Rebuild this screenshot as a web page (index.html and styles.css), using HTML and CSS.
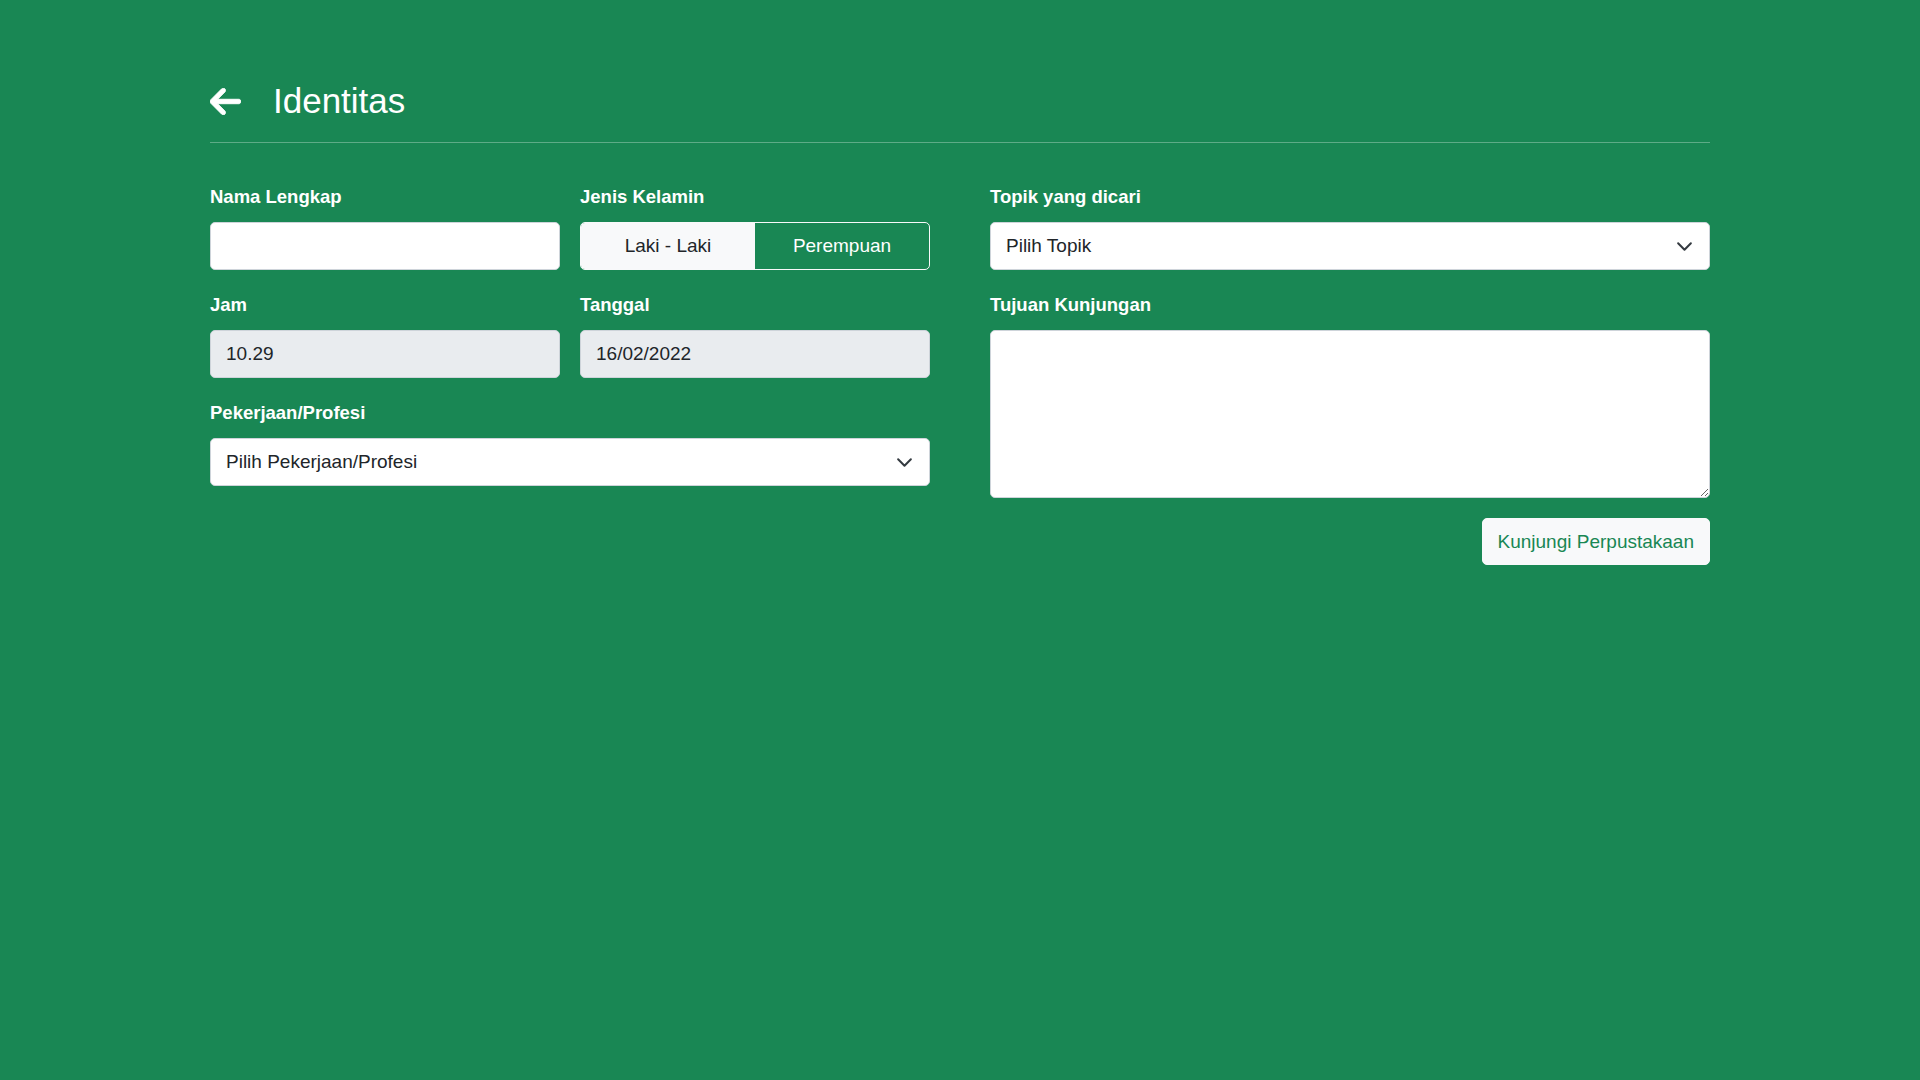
FILE: index.html
```html
<!DOCTYPE html>
<html lang="id">
<head>
<meta charset="utf-8">
<title>Identitas</title>
<link rel="stylesheet" href="styles.css">
</head>
<body>
<div class="container">
  <header class="page-head">
    <a class="back" href="#" aria-label="Kembali">
      <svg viewBox="0 64 448 384" width="31" height="27"><path fill="#fff" stroke="#fff" stroke-width="14" d="M9.4 233.4c-12.5 12.5-12.5 32.8 0 45.3l160 160c12.5 12.5 32.8 12.5 45.3 0s12.5-32.8 0-45.3L109.2 288 416 288c17.7 0 32-14.3 32-32s-14.3-32-32-32l-306.7 0L214.6 118.6c12.5-12.5 12.5-32.8 0-45.3s-32.8-12.5-45.3 0l-160 160z"/></svg>
    </a>
    <h1 class="title">Identitas</h1>
  </header>
  <div class="divider"></div>

  <form class="form-grid">
    <div class="col">
      <div class="pair">
        <div class="field">
          <label class="label">Nama Lengkap</label>
          <input class="control" type="text">
        </div>
        <div class="field">
          <label class="label">Jenis Kelamin</label>
          <div class="toggle">
            <span class="toggle-btn active">Laki - Laki</span>
            <span class="toggle-btn">Perempuan</span>
          </div>
        </div>
        <div class="field">
          <label class="label">Jam</label>
          <input class="control readonly" type="text" value="10.29" readonly>
        </div>
        <div class="field">
          <label class="label">Tanggal</label>
          <input class="control readonly" type="text" value="16/02/2022" readonly>
        </div>
      </div>
      <div class="field">
        <label class="label">Pekerjaan/Profesi</label>
        <div class="control select">Pilih Pekerjaan/Profesi
          <svg class="chev" viewBox="0 0 16 16" width="17" height="17"><path fill="none" stroke="#343a40" stroke-linecap="round" stroke-linejoin="round" stroke-width="1.9" d="m2 5 6 6 6-6"/></svg>
        </div>
      </div>
    </div>

    <div class="col">
      <div class="field">
        <label class="label">Topik yang dicari</label>
        <div class="control select">Pilih Topik
          <svg class="chev" viewBox="0 0 16 16" width="17" height="17"><path fill="none" stroke="#343a40" stroke-linecap="round" stroke-linejoin="round" stroke-width="1.9" d="m2 5 6 6 6-6"/></svg>
        </div>
      </div>
      <div class="field">
        <label class="label">Tujuan Kunjungan</label>
        <textarea class="control area"></textarea>
      </div>
      <div class="actions">
        <button type="button" class="btn-light">Kunjungi Perpustakaan</button>
      </div>
    </div>
  </form>
</div>
</body>
</html>
```

FILE: styles.css
```css
* { box-sizing: border-box; }

html, body {
  margin: 0;
  padding: 0;
  background: #198754;
  font-family: "Liberation Sans", Arial, sans-serif;
  color: #fff;
}

body { min-height: 1080px; }

.container {
  width: 1500px;
  margin: 0 auto;
  padding-top: 80px;
}

.page-head {
  display: flex;
  align-items: center;
  height: 42px;
}

.back {
  display: flex;
  align-items: center;
  width: 31px;
  margin-right: 32px;
}

.title {
  margin: 0;
  font-size: 35px;
  font-weight: 400;
  line-height: 42px;
  color: #fff;
}

.divider {
  margin: 20px 0 39px;
  border-top: 1px solid rgba(255, 255, 255, 0.3);
}

.form-grid {
  display: grid;
  grid-template-columns: 720px 720px;
  column-gap: 60px;
}

.pair {
  display: grid;
  grid-template-columns: 1fr 1fr;
  column-gap: 20px;
}

.field {
  margin-bottom: 20px;
}

.label {
  display: block;
  font-size: 18.5px;
  font-weight: 700;
  line-height: 30px;
  margin-bottom: 10px;
  color: #fff;
}

.control {
  display: block;
  width: 100%;
  height: 48px;
  padding: 8px 15px;
  font-family: inherit;
  font-size: 19px;
  line-height: 30px;
  color: #212529;
  background: #fff;
  border: 1px solid #ced4da;
  border-radius: 5px;
  outline: none;
}

.readonly {
  background: #e9ecef;
}

.select {
  position: relative;
  padding-right: 50px;
}

.chev {
  position: absolute;
  right: 16px;
  top: 15px;
}

.area {
  height: 168px;
  resize: vertical;
  margin: 0;
}

.toggle {
  display: flex;
  height: 48px;
  border-radius: 5px;
  overflow: hidden;
  border: 1px solid #f8f9fa;
}

.toggle-btn {
  flex: 1 1 0;
  display: flex;
  align-items: center;
  justify-content: center;
  font-size: 19px;
  color: #fff;
}

.toggle-btn.active {
  background: #f8f9fa;
  color: #212529;
}

.actions {
  display: flex;
  justify-content: flex-end;
}

.btn-light {
  height: 47px;
  padding: 7.5px 15px;
  font-family: inherit;
  font-size: 19px;
  line-height: 30px;
  color: #198754;
  background: #f8f9fa;
  border: 1px solid #f8f9fa;
  border-radius: 5px;
  cursor: pointer;
}
```
